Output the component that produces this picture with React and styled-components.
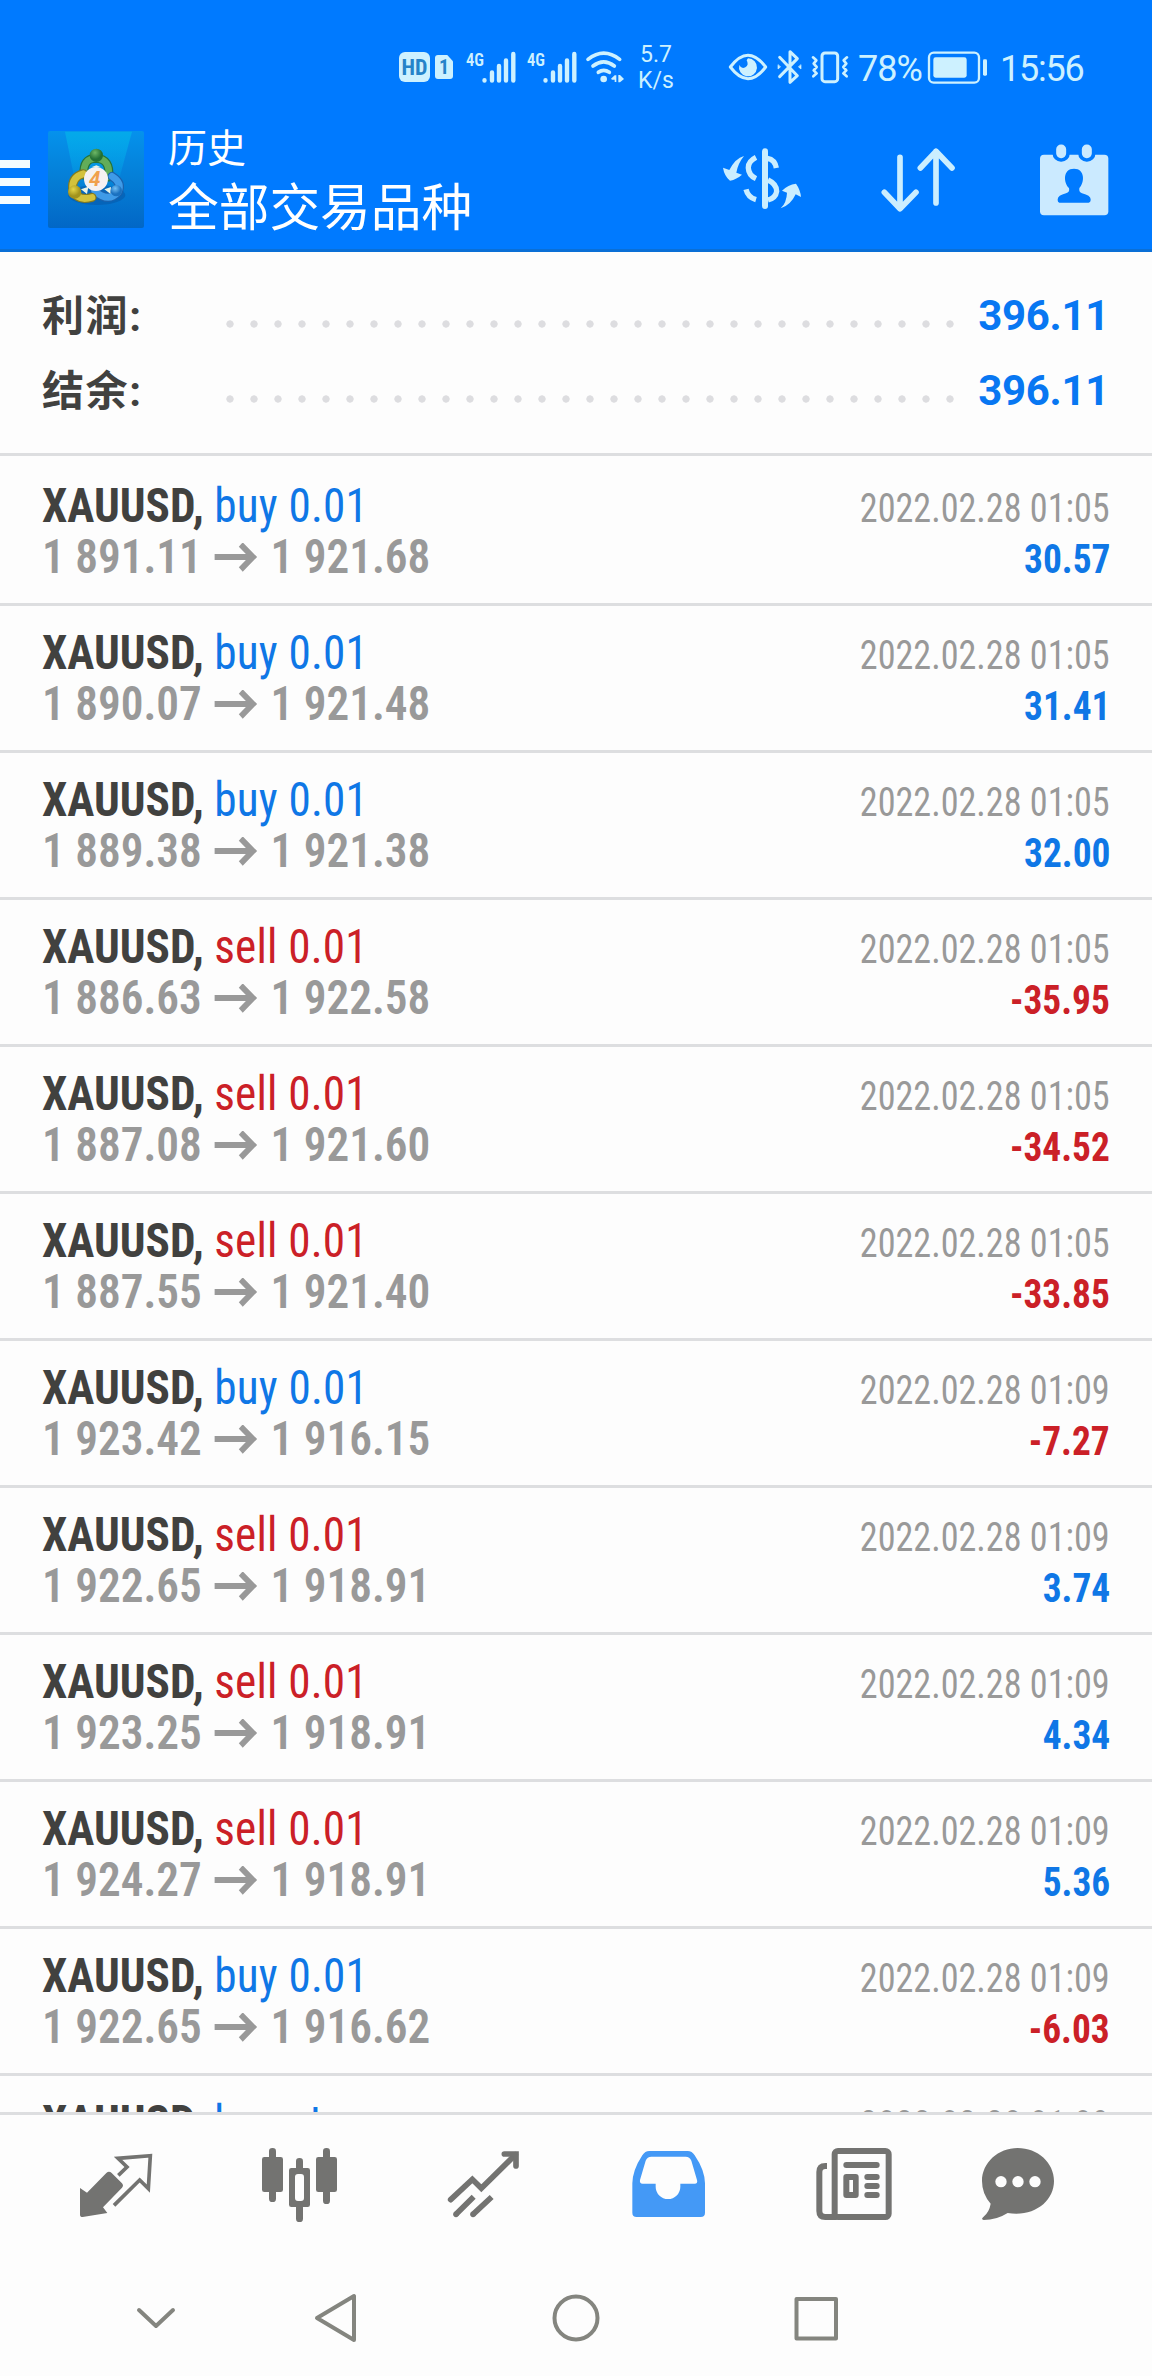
import React from 'react';
import styled, { createGlobalStyle, ThemeProvider } from 'styled-components';

const theme = {
  header: '#007aff',
  headerEdge: '#0a6fd6',
  tint: '#cdf1ff',
  background: '#fdfdfd',
  border: '#dddee0',
  text: '#41413f',
  muted: '#999999',
  blue: '#0f77e6',
  red: '#cb2027',
  tab: '#737371',
  tabActive: '#4499f6',
  nav: '#84857f',
};

const GlobalStyle = createGlobalStyle`
  body {
    margin: 0;
    background: #fdfdfd;
    font-family: Roboto, "Noto Sans CJK SC", sans-serif;
  }
`;

const Screen = styled.div`
  display: flex;
  flex-direction: column;
  width: 1152px;
  height: 2376px;
  overflow: hidden;
  background: ${props => props.theme.background};
`;

const Header = styled.header`
  flex: none;
  height: 249px;
  background: ${props => props.theme.header};
  border-bottom: 3px solid ${props => props.theme.headerEdge};
`;

const StatusBar = styled.div`
  display: flex;
  align-items: center;
  height: 86px;
  padding: 24px 0 0 399px;
  color: ${props => props.theme.tint};
`;

const StatusIcon = styled.svg`
  flex: none;
  overflow: visible;
  height: 34px;
  width: ${props => props.$width}px;
  margin-left: ${props => props.$gap || 9}px;
  fill: none;
  stroke: ${props => props.theme.tint};
  stroke-linecap: round;
  stroke-linejoin: round;
`;

const HdBadge = styled.span`
  width: 31px;
  height: 30px;
  border-radius: 6px;
  background: ${props => props.theme.tint};
  color: #2583c9;
  font: bold 22px/31px "Roboto Condensed", Roboto, sans-serif;
  text-align: center;
`;

const SimBadge = styled.span`
  width: 18px;
  height: 24px;
  margin-left: 5px;
  border-radius: 3px;
  background: ${props => props.theme.tint};
  clip-path: polygon(0 0, 68% 0, 100% 26%, 100% 100%, 0 100%);
  color: #2583c9;
  font: bold 20px/25px "Roboto Condensed", Roboto, sans-serif;
  text-align: center;
`;

const Speed = styled.span`
  width: 36px;
  margin: 2px 0 0 14px;
  font-size: 23px;
  line-height: 26.5px;
  text-align: center;
`;

const StatusText = styled.span`
  width: ${props => props.$width}px;
  margin-left: ${props => props.$gap}px;
  padding-top: 4px;
  font-size: 36px;
  line-height: 40px;
  letter-spacing: ${props => props.$tracking}px;
  white-space: nowrap;
`;

const AppBar = styled.div`
  display: flex;
  align-items: center;
  height: 139px;
  padding-right: 38px;
`;

const MenuButton = styled.div`
  display: flex;
  flex-direction: column;
  gap: 10px;
  width: 30px;
  margin: 5px 18px 0 0;
`;

const MenuBar = styled.span`
  height: 8px;
  background: #f4fcff;
`;

const Titles = styled.div`
  flex: 1;
  padding: 4px 0 0 24px;
  color: #fff;
`;

const Subtitle = styled.div`
  font-size: 39px;
  line-height: 55px;
`;

const Title = styled.div`
  font-size: 50.7px;
  line-height: 64px;
`;

const Actions = styled.div`
  display: flex;
  gap: 76px;
`;

const ActionIcon = styled.svg`
  width: 80px;
  height: 80px;
  fill: none;
  stroke: #cbeeff;
`;

const Summary = styled.section`
  flex: none;
  height: 175px;
  padding: 26px 43px 0 42px;
  border-bottom: 3px solid ${props => props.theme.border};
`;

const SummaryRow = styled.div`
  display: flex;
  align-items: center;
  height: 75px;
  font-size: 42px;
  font-weight: bold;
  line-height: 75px;
`;

const SummaryLabel = styled.span`
  width: 176px;
  padding-top: 2px;
  color: ${props => props.theme.text};
  letter-spacing: 1.6px;
`;

const Dots = styled.span`
  width: 744px;
  height: 8px;
  margin-top: 16px;
  background: radial-gradient(circle, #dddde0 3.3px, transparent 4px) 0 0 / 24px 8px;
`;

const SummaryValue = styled.span`
  margin-left: auto;
  color: #0877f2;
  letter-spacing: -0.3px;
`;

const Deals = styled.main`
  flex: none;
  height: 1653px;
  padding-top: 3px;
  overflow: hidden;
`;

const DealRow = styled.div`
  box-sizing: border-box;
  height: 147px;
  padding: 21px 42px 0;
  border-bottom: 3px solid ${props => props.theme.border};
  font-family: "Roboto Condensed", Roboto, sans-serif;
`;

const Line = styled.div`
  display: flex;
  align-items: baseline;
  justify-content: space-between;
  height: 51px;
  line-height: 51px;
  white-space: nowrap;
`;

const Left = styled.span`
  font-size: 48px;
  transform: scaleX(0.942);
  transform-origin: left;
`;

const Right = styled.span`
  font-size: 40px;
  transform: scaleX(${props => props.$stretch || 0.935});
  transform-origin: right;
`;

const Symbol = styled.span`
  font-weight: 700;
  color: ${props => props.theme.text};
`;

const Side = styled.span`
  color: ${props => (props.$sell ? props.theme.red : props.theme.blue)};
  letter-spacing: 0.2px;
`;

const Prices = styled(Left)`
  font-weight: 600;
  color: ${props => props.theme.muted};
`;

const PriceArrow = styled.svg`
  width: 46px;
  height: 30px;
  margin: 0 14px 0 13px;
  fill: none;
  stroke: currentColor;
  stroke-width: 6;
`;

const Time = styled(Right)`
  color: ${props => props.theme.muted};
`;

const Profit = styled(Right)`
  font-weight: 700;
  color: ${props => (props.$loss ? props.theme.red : props.theme.blue)};
`;

const TabBar = styled.nav`
  display: flex;
  flex: none;
  gap: 104px;
  height: 125px;
  padding: 30px 0 0 76px;
  border-top: 3px solid ${props => props.theme.border};
`;

const TabIcon = styled.svg`
  flex: none;
  width: 80px;
  height: 80px;
  fill: ${props => (props.$active ? props.theme.tabActive : props.theme.tab)};
  stroke: none;

  &:last-child {
    margin-left: -18px;
  }
`;

const SystemNav = styled.div`
  display: flex;
  flex: none;
  align-items: center;
  height: 95px;
  padding-left: 126px;
`;

const NavIcon = styled.svg`
  flex: none;
  width: 60px;
  height: 60px;
  margin-right: ${props => props.$gap || 0}px;
  fill: none;
  stroke: ${props => props.theme.nav};
  stroke-width: 4;
  stroke-linecap: round;
  stroke-linejoin: round;
`;

const SmallText = styled.text`
  fill: ${props => props.theme.tint};
  stroke: none;
  font: 600 19px "Roboto Condensed", Roboto, sans-serif;
`;

const LogoText = styled.text`
  fill: #f0a04b;
  font: italic bold 62px Roboto, sans-serif;
`;

const deals = [
  ['buy 0.01', '1 891.11', '1 921.68', '2022.02.28 01:05', '30.57'],
  ['buy 0.01', '1 890.07', '1 921.48', '2022.02.28 01:05', '31.41'],
  ['buy 0.01', '1 889.38', '1 921.38', '2022.02.28 01:05', '32.00'],
  ['sell 0.01', '1 886.63', '1 922.58', '2022.02.28 01:05', '-35.95'],
  ['sell 0.01', '1 887.08', '1 921.60', '2022.02.28 01:05', '-34.52'],
  ['sell 0.01', '1 887.55', '1 921.40', '2022.02.28 01:05', '-33.85'],
  ['buy 0.01', '1 923.42', '1 916.15', '2022.02.28 01:09', '-7.27'],
  ['sell 0.01', '1 922.65', '1 918.91', '2022.02.28 01:09', '3.74'],
  ['sell 0.01', '1 923.25', '1 918.91', '2022.02.28 01:09', '4.34'],
  ['sell 0.01', '1 924.27', '1 918.91', '2022.02.28 01:09', '5.36'],
  ['buy 0.01', '1 922.65', '1 916.62', '2022.02.28 01:09', '-6.03'],
  ['buy stop', null, null, '2022.02.28 01:09', null],
];

const Signal = ({gap}) => (
  <StatusIcon $width={50} $gap={gap} viewBox="0 0 50 34" strokeWidth="4.4">
    <SmallText x="0" y="15.5" textLength="18" lengthAdjust="spacingAndGlyphs">4G</SmallText>
    <path d="M18.5 30.3v.2M26 22.5v8M33 16v14.5M40 10.5v20M47.3 4v26.5" />
  </StatusIcon>
);

const Logo = () => (
  <svg width="96" height="97" viewBox="24 34 288 291">
    <defs>
      <linearGradient id="sky" x1="0" y1="0" x2="0" y2="1">
        <stop offset="0" stopColor="#0592ec" />
        <stop offset="0.55" stopColor="#057cd4" />
        <stop offset="1" stopColor="#0267c6" />
      </linearGradient>
      <linearGradient id="beam" x1="0" y1="0" x2="0" y2="1">
        <stop offset="0" stopColor="#04aaea" />
        <stop offset="1" stopColor="#04aaea" stopOpacity="0" />
      </linearGradient>
      <radialGradient id="green" cx="0.4" cy="0.3">
        <stop offset="0" stopColor="#6db765" />
        <stop offset="1" stopColor="#237035" />
      </radialGradient>
      <radialGradient id="gold" cx="0.4" cy="0.3">
        <stop offset="0" stopColor="#e6d648" />
        <stop offset="1" stopColor="#a2931d" />
      </radialGradient>
      <radialGradient id="azure" cx="0.4" cy="0.3">
        <stop offset="0" stopColor="#72bff5" />
        <stop offset="1" stopColor="#1b71c0" />
      </radialGradient>
    </defs>
    <rect x="24" y="34" width="288" height="291" rx="6" fill="url(#sky)" />
    <path d="M75 36H276L226 220H112z" fill="url(#beam)" />
    <ellipse cx="170" cy="226" rx="86" ry="30" fill="#0758a8" opacity="0.55" />
    <g fill="none" strokeLinecap="round">
      <path d="M132 166Q128 116 168 116Q212 118 206 172" stroke="#25723a" strokeWidth="27" />
      <path d="M132 166Q128 116 168 116Q212 118 206 172" stroke="#62ad59" strokeWidth="20" />
      <path d="M216 170Q248 190 234 218Q205 250 164 214" stroke="#1a62ae" strokeWidth="27" />
      <path d="M216 170Q248 190 234 218Q205 250 164 214" stroke="#3f9be8" strokeWidth="20" />
      <path d="M130 162Q94 172 98 210Q112 246 156 233" stroke="#827a20" strokeWidth="27" />
      <path d="M130 162Q94 172 98 210Q112 246 156 233" stroke="#d3c23c" strokeWidth="20" />
    </g>
    <path d="M123 209l22-8-4 22zM193 209l20-7-2 20zM154 143l15-6 14 6z" fill="#e8f3e6" />
    <circle cx="169" cy="107" r="20" fill="url(#green)" />
    <circle cx="104" cy="217" r="20" fill="url(#gold)" />
    <circle cx="229" cy="213" r="17" fill="url(#azure)" />
    <circle cx="168" cy="178" r="36" fill="#f5f1f1" />
    <LogoText x="147" y="200">4</LogoText>
  </svg>
);

const Deal = ({side, open, close, time, profit}) => (
  <DealRow>
    <Line>
      <Left>
        <Symbol>XAUUSD, </Symbol>
        <Side $sell={side.startsWith('sell')}>{side}</Side>
      </Left>
      <Time $stretch={0.903}>{time}</Time>
    </Line>
    {open && (
      <Line>
        <Prices>
          {open}
          <PriceArrow viewBox="0 0 46 30">
            <path d="M0 14H41M28 1.5L41 14L28 26.5" />
          </PriceArrow>
          {close}
        </Prices>
        <Profit $loss={profit.startsWith('-')}>{profit}</Profit>
      </Line>
    )}
  </DealRow>
);

export default function App() {
  return (
    <ThemeProvider theme={theme}>
      <GlobalStyle />
      <Screen>
        <Header>
          <StatusBar>
            <HdBadge>HD</HdBadge>
            <SimBadge>1</SimBadge>
            <Signal gap={13} />
            <Signal gap={11} />
            <StatusIcon $width={38} viewBox="618 90 114 102" strokeWidth="11">
              <path d="M624 118Q671 81 719 118M639 138Q671 113 703 138M655 157Q671 145 688 157" />
              <g fill={theme.tint} stroke="none">
                <circle cx="671" cy="177" r="10" />
                <path d="M693 176l11-10h5v20h-5v-7h-8zM715 165l5 0 12 12-12 10h-5z" />
              </g>
            </StatusIcon>
            <Speed>5.7 K/s</Speed>
            <StatusIcon $width={40} $gap={54} viewBox="84 90 120 102" strokeWidth="9">
              <path d="M91 141Q144 70 197 141Q144 211 91 141z" />
              <path d="M144 115a27 27 0 1 1-26 20q6 13 18 7q12-7 4-21z" fill={theme.tint} stroke="none" />
            </StatusIcon>
            <StatusIcon $width={25} viewBox="232 90 75 102" strokeWidth="9">
              <path d="M240 112L293 167L271 187V95L293 116L240 170" />
              <path d="M235 135v12l7-6zM304 135v12l-7-6z" fill={theme.tint} strokeWidth="2" />
            </StatusIcon>
            <StatusIcon $width={38} viewBox="333 90 114 102" strokeWidth="8">
              <rect x="366" y="99" width="47" height="86" rx="9" strokeWidth="9" />
              <path d="M339 112l10 9-8 10 9 10-9 10 9 9-10 9M441 112l-10 9 8 10-9 10 9 10-9 9 10 9" />
            </StatusIcon>
            <StatusText $width={65} $gap={9} $tracking={-1}>78%</StatusText>
            <StatusIcon $width={60} $gap={5} viewBox="684 90 180 102" strokeWidth="7">
              <rect x="687" y="98" width="150" height="90" rx="14" />
              <g fill={theme.tint} stroke="none">
                <rect x="700" y="112" width="100" height="61" rx="7" />
                <rect x="849" y="118" width="12" height="49" rx="4" />
              </g>
            </StatusIcon>
            <StatusText $width={90} $gap={12} $tracking={-1.2}>15:56</StatusText>
          </StatusBar>
          <AppBar>
            <MenuButton>
              <MenuBar />
              <MenuBar />
              <MenuBar />
            </MenuButton>
            <Logo />
            <Titles>
              <Subtitle>历史</Subtitle>
              <Title>全部交易品种</Title>
            </Titles>
            <Actions>
              <ActionIcon viewBox="96 88 240 240" strokeWidth="16">
                <path d="M225 122V286" strokeWidth="18" strokeLinecap="round" />
                <path d="M198 140Q174 152 175 172Q176 194 198 204M232 143Q255 147 259 172M234 208Q260 220 260 242Q257 262 234 268M168 236Q174 260 198 267" />
                <path
                  d="M162 136Q136 143 118 178L99 171Q103 196 120 210Q140 206 156 192L139 186Q144 158 162 136zM272 293Q290 276 291 246L276 240Q294 222 318 219Q331 237 333 259L317 251Q302 284 272 293z"
                  fill="#cbeeff"
                  stroke="none"
                />
              </ActionIcon>
              <ActionIcon viewBox="564 88 240 240" strokeWidth="17" strokeLinecap="round" strokeLinejoin="round">
                <path d="M630 140V293M583 245L630 294L678 245M738 277V122M691 172L738 122L786 172" />
              </ActionIcon>
              <ActionIcon viewBox="1032 88 240 240">
                <rect x="1050" y="132" width="205" height="182" rx="12" fill="#cbeaff" stroke="none" />
                <g fill="#cbeaff" stroke={theme.header} strokeWidth="11">
                  <rect x="1093" y="96" width="41" height="52" rx="20" />
                  <rect x="1170" y="96" width="41" height="52" rx="20" />
                </g>
                <path
                  d="M1152 174C1186 174 1184 216 1168 232Q1166 245 1176 248Q1202 254 1202 266Q1202 276 1196 276H1108Q1103 276 1103 266Q1103 254 1128 248Q1140 245 1137 232C1120 216 1118 174 1152 174z"
                  fill={theme.header}
                  stroke="none"
                />
              </ActionIcon>
            </Actions>
          </AppBar>
        </Header>

        <Summary>
          <SummaryRow>
            <SummaryLabel>利润:</SummaryLabel>
            <Dots />
            <SummaryValue>396.11</SummaryValue>
          </SummaryRow>
          <SummaryRow>
            <SummaryLabel>结余:</SummaryLabel>
            <Dots />
            <SummaryValue>396.11</SummaryValue>
          </SummaryRow>
        </Summary>

        <Deals>
          {deals.map(([side, open, close, time, profit], index) => (
            <Deal key={index} side={side} open={open} close={close} time={time} profit={profit} />
          ))}
        </Deals>

        <TabBar>
          <TabIcon viewBox="18 45 240 240">
            <path d="M30 174L51 188L109 129Q117 122 125 129L156 160Q162 167 156 173L99 232L112 249L38 261Q30 261 30 254z" />
            <path d="M145 136L171 111L144 85L241 77L235 176L209 150L132 226" fill="none" stroke={theme.tab} strokeWidth="11" />
          </TabIcon>
          <TabIcon viewBox="570 45 240 240">
            <rect x="576" y="81" width="63" height="105" rx="7" />
            <rect x="597" y="54" width="21" height="162" rx="10" />
            <rect x="738" y="81" width="63" height="105" rx="7" />
            <rect x="759" y="54" width="21" height="168" rx="10" />
            <rect x="678" y="84" width="21" height="40" rx="10" />
            <rect x="678" y="222" width="21" height="54" rx="10" />
            <path d="M664 114h49q7 0 7 7v103q0 7-7 7h-49q-7 0-7-7v-103q0-7 7-7zM684 132q-9 0-9 9v63q0 9 9 9h9q9 0 9-9v-63q0-9-9-9z" fillRule="evenodd" />
          </TabIcon>
          <TabIcon viewBox="1122 45 240 240">
            <g fill="none" stroke={theme.tab} strokeWidth="17">
              <path d="M1142 209L1207 148L1234 175L1336 74" strokeLinecap="round" />
              <path d="M1303 72H1338V108" strokeLinecap="round" />
              <path d="M1158 253L1211 200M1209 253L1265 201" />
            </g>
            <circle cx="1158" cy="253" r="8.5" />
            <circle cx="1209" cy="253" r="8.5" />
          </TabIcon>
          <TabIcon $active viewBox="54 45 240 240">
            <path
              d="M118 63H233Q246 63 254 76Q284 120 285 160V248Q285 261 272 261H80Q67 261 67 248V160Q68 120 97 76Q105 63 118 63zM124 80Q112 80 107 92L90 150Q88 161 98 161H137V170A37 37 0 0 0 211 170V161H254Q264 161 261 150L244 92Q239 80 227 80z"
              fillRule="evenodd"
            />
          </TabIcon>
          <TabIcon viewBox="606 45 240 240">
            <g fill="none" stroke={theme.tab} strokeWidth="18">
              <rect x="674" y="63" width="162" height="198" rx="10" />
              <path d="M651 108H646Q628 108 628 126V243Q628 261 646 261H680" />
            </g>
            <rect x="700" y="96" width="109" height="18" rx="9" />
            <rect x="763" y="132" width="46" height="18" rx="9" />
            <rect x="763" y="159" width="46" height="18" rx="9" />
            <rect x="763" y="186" width="46" height="18" rx="9" />
            <path d="M709 132h28q9 0 9 9v54q0 9-9 9h-28q-9 0-9-9v-54q0-9 9-9zM718 150v36h11v-36z" fillRule="evenodd" />
          </TabIcon>
          <TabIcon viewBox="1104 45 240 240">
            <path d="M1223 54C1283 54 1332 98 1332 153C1332 214 1272 262 1193 249Q1160 270 1121 270Q1112 268 1120 261Q1138 246 1142 221Q1116 192 1116 153C1116 98 1165 54 1223 54z" />
            <g fill={theme.background}>
              <circle cx="1173" cy="155" r="17" />
              <circle cx="1224" cy="155" r="17" />
              <circle cx="1275" cy="155" r="17" />
            </g>
          </TabIcon>
        </TabBar>

        <SystemNav>
          <NavIcon $gap={120} viewBox="0 0 60 60">
            <path d="M13 22L30 38L47 22" />
          </NavIcon>
          <NavIcon $gap={180} viewBox="0 0 60 60">
            <path d="M48 8V52L11 30z" />
          </NavIcon>
          <NavIcon $gap={180} viewBox="0 0 60 60">
            <circle cx="30" cy="30" r="21.5" />
          </NavIcon>
          <NavIcon viewBox="0 0 60 60">
            <rect x="10.5" y="11" width="39.5" height="39.5" />
          </NavIcon>
        </SystemNav>
      </Screen>
    </ThemeProvider>
  );
}
